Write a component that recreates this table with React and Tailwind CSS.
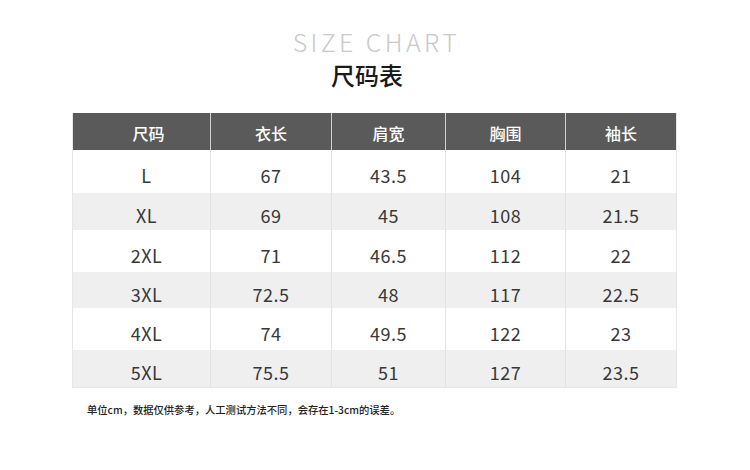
import React from "react";

const rows = [
  { h: "h-[43px]", bg: "bg-white", d: ["L", "67", "43.5", "104", "21"] },
  { h: "h-[37px]", bg: "bg-[#efefef]", d: ["XL", "69", "45", "108", "21.5"] },
  { h: "h-[42px]", bg: "bg-white", d: ["2XL", "71", "46.5", "112", "22"] },
  { h: "h-[36px]", bg: "bg-[#efefef]", d: ["3XL", "72.5", "48", "117", "22.5"] },
  { h: "h-[42px]", bg: "bg-white", d: ["4XL", "74", "49.5", "122", "23"] },
  { h: "h-[37px]", bg: "bg-[#efefef]", d: ["5XL", "75.5", "51", "127", "23.5"] },
];

const headers = ["尺码", "衣长", "肩宽", "胸围", "袖长"];

export default function App() {
  return (
    <div
      className="w-[750px] h-[470px] bg-white overflow-hidden"
      style={{ fontFamily: '"Noto Sans CJK SC", "Noto Sans", sans-serif' }}
    >
      <div className="flex flex-col items-center pt-[26px]">
        <div className="text-[25px] leading-[30px] font-light tracking-[3.4px] text-[#c9c9c9] pl-[3px]">
          SIZE CHART
        </div>
        <div className="text-[24px] leading-[32px] font-medium text-[#1a1a1a] mt-[3px] mr-[16px]">
          尺码表
        </div>
      </div>
      <div className="ml-[72px] mt-[22px] w-[605px] border-l border-r border-b border-[#e6e6e6]">
        <div className="grid grid-cols-[137px_121px_114px_120px_111px] h-[37px] bg-[#5a5a5a] text-white text-[16px] font-medium">
          {headers.map((t, i) => (
            <div
              key={t}
              className={
                "flex items-center justify-center pt-[3px] " +
                (i === 0 ? "pl-[14px] " : "border-l border-[#cfcfcf] ")
              }
            >
              {t}
            </div>
          ))}
        </div>
        {rows.map((r, ri) => (
          <div
            key={ri}
            className={"grid grid-cols-[137px_121px_114px_120px_111px] text-[18px] tracking-[0.5px] text-[#383838] " + r.h + " " + r.bg}
          >
            {r.d.map((t, i) => (
              <div
                key={i}
                className={
                  "flex items-center justify-center pt-[8px] " +
                  (i === 0 ? "pl-[10px] " : "border-l border-[#e3e3e3] ")
                }
              >
                {t}
              </div>
            ))}
          </div>
        ))}
      </div>
      <p className="ml-[87px] mt-[14px] text-[10.3px] leading-[16px] font-medium text-[#222222]">
        单位cm，数据仅供参考，人工测试方法不同，会存在1-3cm的误差。
      </p>
    </div>
  );
}
